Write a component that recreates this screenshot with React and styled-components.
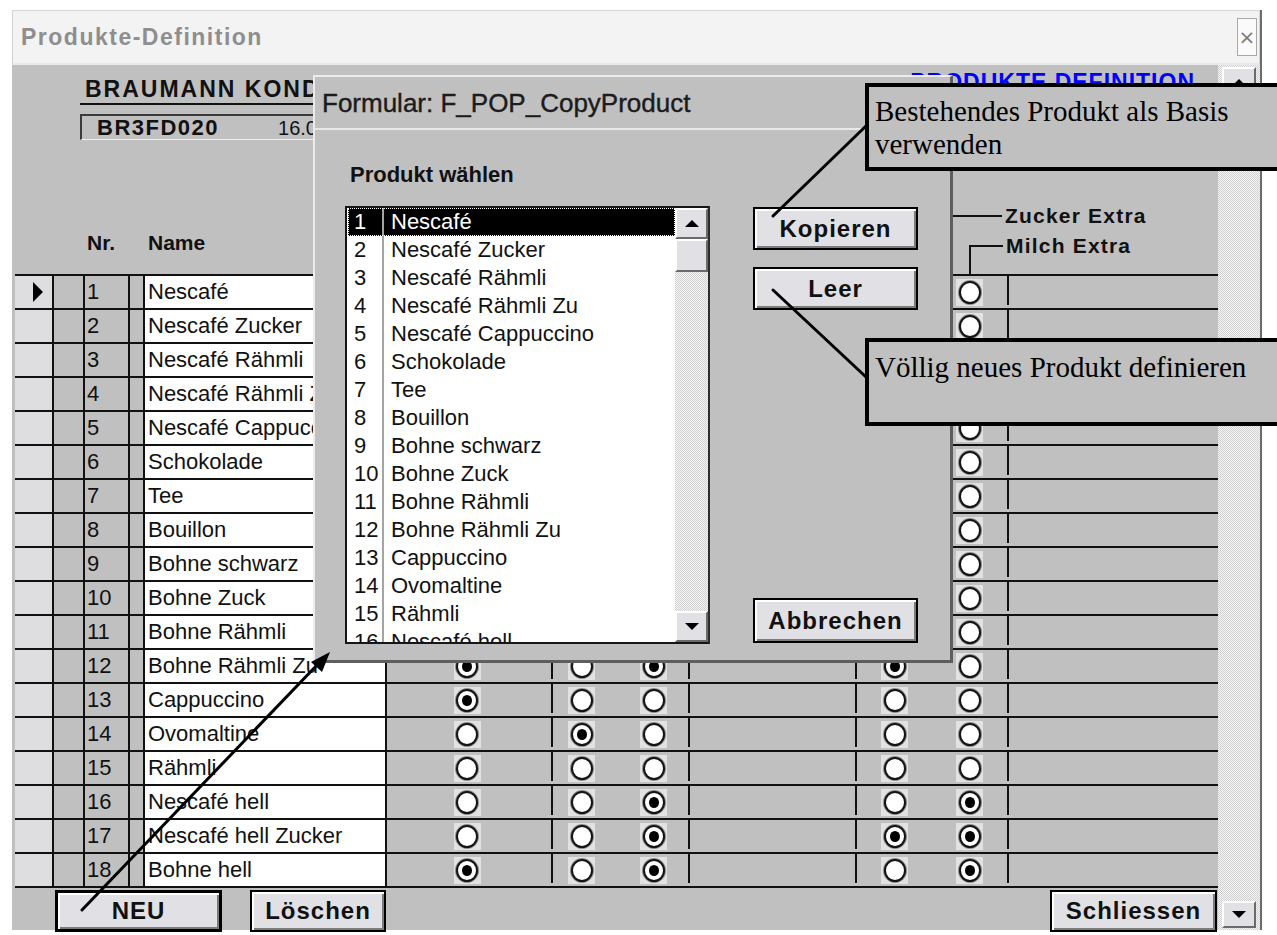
import React from "react";
import styled, { createGlobalStyle, css } from "styled-components";

const INK = "#111111";
const FACE = "#c0c0c0";
const BTN = "#e1e1e5";
const SANS = `"Liberation Sans", Arial, sans-serif`;
const SERIF = `"Liberation Serif", "Times New Roman", serif`;

const dither = css`
  background-color: #f2f2f2;
  background-image: repeating-conic-gradient(#cfcfcf 0 25%, #f6f6f6 0 50%);
  background-size: 2px 2px;
`;

const GlobalStyle = createGlobalStyle`
  *, *::before, *::after { box-sizing: border-box; }
  html, body { margin: 0; padding: 0; overflow: hidden; background: #ffffff; }
  body { font-family: ${SANS}; color: ${INK}; }
`;

/* ---------- desktop + main window ---------- */

const Screen = styled.div`
  position: relative;
  width: 1277px;
  height: 935px;
  overflow: hidden;
  background: #ffffff;
`;

const Window = styled.div`
  margin: 10px 0 0 12px;
  width: 1250px;
  height: 920px;
  display: flex;
  flex-direction: column;
  background: ${FACE};
  border-right: 2px solid #6c6c6c;
`;

const TitleBar = styled.header`
  height: 55px;
  flex: none;
  display: flex;
  align-items: center;
  padding: 0 2px 0 8px;
  background: #f3f3f3;
  border: 1px solid #d4d4d4;
  border-bottom: 2px solid #e9e9e9;
`;

const WindowTitle = styled.h1`
  margin: 0;
  font: bold 23px/1 ${SANS};
  letter-spacing: 1.5px;
  color: #8e8e8e;
`;

const CloseBox = styled.span`
  margin-left: auto;
  width: 20px;
  height: 38px;
  display: flex;
  align-items: center;
  justify-content: center;
  border: 1px solid #a8a8a8;
  background: #fafafa;
  color: #7a7a7a;
  font: 20px/1 "DejaVu Sans", sans-serif;
`;

const Body = styled.div`
  flex: 1;
  min-height: 0;
  display: flex;
`;

const Form = styled.main`
  flex: 1;
  min-width: 0;
  display: flex;
  flex-direction: column;
  padding-left: 3px;
`;

/* ---------- form header ---------- */

const Header = styled.div`
  height: 211px;
  width: 1203px;
  flex: none;
  display: flex;
  border-bottom: 2px solid ${INK};
`;

const HeaderLeft = styled.div`
  width: 370px;
  flex: none;
  display: flex;
  flex-direction: column;
  padding-left: 65px;
`;

const Company = styled.div`
  margin-top: 10px;
  width: 233px;
  height: 30px;
  padding-left: 5px;
  border-bottom: 2px solid ${INK};
  font: bold 23px/28px ${SANS};
  letter-spacing: 2px;
  white-space: nowrap;
  overflow: hidden;
`;

const CodeBox = styled.div`
  margin-top: 9px;
  width: 233px;
  height: 26px;
  display: flex;
  align-items: center;
  gap: 59px;
  padding-left: 15px;
  border-top: 2px solid #3a3a3a;
  border-left: 2px solid #3a3a3a;
  border-bottom: 1px solid #efefef;
  font: 20px/1 ${SANS};
  white-space: nowrap;
  overflow: hidden;
`;

const CodeId = styled.b`
  font: bold 22px/1 ${SANS};
  letter-spacing: 1.5px;
`;

const ColumnLabels = styled.div`
  margin-top: auto;
  margin-bottom: 20px;
  display: flex;
  font: bold 21px/22px ${SANS};
`;

const ColumnLabel = styled.span`
  width: ${(p) => p.$w}px;
  padding-left: ${(p) => p.$pad || 0}px;
`;

const HeaderRight = styled.div`
  flex: 1;
  display: flex;
  flex-direction: column;
`;

const ReportTitle = styled.div`
  align-self: flex-end;
  margin: 4px 23px 0 0;
  font: bold 23px/26px ${SANS};
  letter-spacing: 1px;
  color: #0000ff;
  white-space: nowrap;
`;

const Legend = styled.div`
  margin-top: auto;
  display: grid;
`;

const Bracket = styled.div`
  grid-area: 1 / 1;
  align-self: end;
  display: flex;
  align-items: flex-start;
  margin-left: ${(p) => p.$left}px;
`;

const BracketLine = styled.span`
  width: ${(p) => p.$w}px;
  height: ${(p) => p.$h}px;
  border-left: 2px solid ${INK};
  border-top: 2px solid ${INK};
`;

const BracketLabel = styled.span`
  margin: -10px 0 0 3px;
  font: bold 21px/22px ${SANS};
  letter-spacing: 1.2px;
  white-space: nowrap;
`;

/* ---------- datasheet rows ---------- */

const Rows = styled.div`
  display: flex;
  flex-direction: column;
`;

const Row = styled.div`
  width: 1203px;
  height: 34px;
  display: flex;
  border-bottom: 2px solid ${INK};
  font: 22px/1 ${SANS};
`;

const Selector = styled.div`
  width: 37px;
  flex: none;
  display: flex;
  align-items: center;
  padding-left: 18px;
  background: #dedee1;
`;

const RowMarker = styled.span`
  width: 0;
  height: 0;
  border-top: 10px solid transparent;
  border-bottom: 10px solid transparent;
  border-left: 10px solid #000;
`;

const Cell = styled.div`
  width: ${(p) => p.$w}px;
  flex: none;
  border-left: 2px solid ${INK};
`;

const NrCell = styled(Cell)`
  display: flex;
  align-items: center;
  padding-left: 2px;
`;

const NameCell = styled(Cell)`
  display: flex;
  align-items: center;
  padding-left: 3px;
  background: #ffffff;
  border-right: 2px solid ${INK};
  white-space: nowrap;
  overflow: hidden;
`;

const RadioGroup = styled.div`
  width: ${(p) => p.$w}px;
  flex: none;
  display: flex;
  align-items: center;
  justify-content: ${(p) => (p.$single ? "center" : "space-between")};
  padding: ${(p) => p.$pad || "0"};
`;

const Divider = styled.span`
  width: 2px;
  flex: none;
  margin-bottom: 3px;
  background: ${INK};
`;

const Filler = styled.div`
  flex: 1;
`;

const RadioFrame = styled.span`
  width: 27px;
  height: 27px;
  display: flex;
  align-items: center;
  justify-content: center;
  background: #e2e2e2;
`;

const RadioDot = styled.span`
  width: 22px;
  height: 23px;
  border-radius: 50%;
  display: flex;
  align-items: center;
  justify-content: center;
  background: #ffffff;
  border: 2px solid #141414;
  box-shadow: 0 0 0 1px #8a8a8a;

  &::after {
    content: "";
    display: ${(p) => (p.$on ? "block" : "none")};
    width: 10px;
    height: 11px;
    border-radius: 50%;
    background: #000;
  }
`;

function Radio({ on }) {
  return (
    <RadioFrame>
      <RadioDot $on={!!on} />
    </RadioFrame>
  );
}

/* ---------- buttons + scrollbars ---------- */

const Button = styled.button`
  width: ${(p) => p.$w}px;
  height: ${(p) => p.$h}px;
  margin: ${(p) => p.$m || "0"};
  flex: none;
  padding: 0;
  background: ${BTN};
  color: ${INK};
  font: bold 24px/1 ${SANS};
  letter-spacing: 1px;
  border: ${(p) => (p.$default ? "3px" : "2px")} solid #000;
  box-shadow: inset 2px 2px 0 #ffffff, inset -2px -2px 0 #7c7c7c;
  cursor: default;
`;

const VScroll = styled.div`
  width: 42px;
  flex: none;
  display: flex;
  flex-direction: column;
  justify-content: space-between;
  padding: 2px 4px 2px 4px;
  ${dither}
`;

const ListScroll = styled.div`
  width: 33px;
  flex: none;
  display: flex;
  flex-direction: column;
  ${dither}
`;

const ScrollButton = styled.span`
  height: ${(p) => p.$h}px;
  flex: none;
  display: flex;
  align-items: center;
  justify-content: center;
  margin-top: ${(p) => (p.$end ? "auto" : "0")};
  background: ${BTN};
  border-top: 2px solid #ffffff;
  border-left: 2px solid #ffffff;
  border-right: 2px solid #6a6a6a;
  border-bottom: 2px solid #6a6a6a;
`;

const Arrow = styled.span`
  width: 0;
  height: 0;
  border-left: 7px solid transparent;
  border-right: 7px solid transparent;
  ${(p) =>
    p.$up ? `border-bottom: 7px solid #000;` : `border-top: 7px solid #000;`}
`;

const BottomBar = styled.div`
  height: 42px;
  flex: none;
  display: flex;
  padding-top: 2px;
  width: 1203px;
`;

/* ---------- copy dialog ---------- */

const Dialog = styled.section`
  position: absolute;
  left: 313px;
  top: 75px;
  width: 640px;
  height: 588px;
  display: flex;
  flex-direction: column;
  background: ${FACE};
  border-top: 2px solid #ececec;
  border-left: 2px solid #ececec;
  border-right: 3px solid #5e5e5e;
  border-bottom: 3px solid #5e5e5e;
`;

const DialogTitle = styled.h2`
  margin: 0;
  height: 53px;
  flex: none;
  display: flex;
  align-items: center;
  padding-left: 7px;
  border-bottom: 2px solid #e8e8e8;
  font: 26px/1 ${SANS};
  -webkit-text-stroke: 0.4px #1c1c1c;
  color: #1c1c1c;
`;

const DialogBody = styled.div`
  flex: 1;
  display: flex;
  padding-left: 30px;
`;

const PickColumn = styled.div`
  display: flex;
  flex-direction: column;
`;

const Prompt = styled.div`
  margin-top: 33px;
  padding-left: 5px;
  font: bold 22px/24px ${SANS};
`;

const ListBox = styled.div`
  margin-top: 19px;
  width: 365px;
  height: 438px;
  display: flex;
  background: #ffffff;
  border: 2px solid #161616;
  border-right-color: #2c2c2c;
`;

const ListItems = styled.div`
  flex: 1;
  overflow: hidden;
  padding-left: 1px;
`;

const ListItem = styled.div`
  height: 28px;
  display: flex;
  font: 22px/1 ${SANS};
  white-space: nowrap;
  ${(p) =>
    p.$selected &&
    css`
      background: #000;
      color: #fff;
      outline: 1px dotted #ffffff;
      outline-offset: -1px;
    `}
`;

const ItemNo = styled.span`
  width: 36px;
  flex: none;
  display: flex;
  align-items: center;
  padding-left: 6px;
  border-right: 2px solid #a4a4a4;
`;

const ItemName = styled.span`
  display: flex;
  align-items: center;
  padding-left: 7px;
`;

const ActionColumn = styled.div`
  display: flex;
  flex-direction: column;
  margin-left: 43px;
  padding: 77px 0 17px;
`;

/* ---------- notes drawn over the screen ---------- */

const Callout = styled.div`
  position: absolute;
  left: 865px;
  top: ${(p) => p.$top}px;
  width: 440px;
  height: 88px;
  padding: ${(p) => p.$padTop}px 6px 0;
  background: ${FACE};
  border: 4px solid #000;
  font: 29px/33px ${SERIF};
  color: #000;
  white-space: nowrap;
`;

const Leaders = styled.svg`
  position: absolute;
  left: 0;
  top: 0;
  pointer-events: none;
`;

const products = [
  ["Nescafé", [1, 0, 1, 0, 0]],
  ["Nescafé Zucker", [1, 0, 1, 1, 0]],
  ["Nescafé Rähmli", [0, 1, 1, 0, 0]],
  ["Nescafé Rähmli Zu", [0, 1, 1, 1, 0]],
  ["Nescafé Cappuccino", [1, 0, 0, 0, 0]],
  ["Schokolade", [0, 1, 0, 0, 0]],
  ["Tee", [0, 0, 0, 0, 0]],
  ["Bouillon", [0, 0, 0, 0, 0]],
  ["Bohne schwarz", [1, 0, 1, 0, 0]],
  ["Bohne Zuck", [1, 0, 1, 1, 0]],
  ["Bohne Rähmli", [1, 0, 1, 0, 0]],
  ["Bohne Rähmli Zu", [1, 0, 1, 1, 0]],
  ["Cappuccino", [1, 0, 0, 0, 0]],
  ["Ovomaltine", [0, 1, 0, 0, 0]],
  ["Rähmli", [0, 0, 0, 0, 0]],
  ["Nescafé hell", [0, 0, 1, 0, 1]],
  ["Nescafé hell Zucker", [0, 0, 1, 1, 1]],
  ["Bohne hell", [1, 0, 1, 0, 1]],
];

function ProductRow({ no, name, picks, current }) {
  const [a, b, c, d, e] = picks;
  return (
    <Row>
      <Selector>{current && <RowMarker />}</Selector>
      <Cell $w={31} />
      <NrCell $w={45}>{no}</NrCell>
      <Cell $w={15} />
      <NameCell $w={244}>{name}</NameCell>
      <RadioGroup $w={164} $single $pad="0 4px 0 0">
        <Radio on={a} />
      </RadioGroup>
      <Divider />
      <RadioGroup $w={135} $pad="0 21px 0 15px">
        <Radio on={b} />
        <Radio on={c} />
      </RadioGroup>
      <Divider />
      <RadioGroup $w={165} />
      <Divider />
      <RadioGroup $w={150} $pad="0 24px 0 24px">
        <Radio on={d} />
        <Radio on={e} />
      </RadioGroup>
      <Divider />
      <Filler />
    </Row>
  );
}

export default function App() {
  return (
    <Screen>
      <GlobalStyle />
      <Window>
        <TitleBar>
          <WindowTitle>Produkte-Definition</WindowTitle>
          <CloseBox>×</CloseBox>
        </TitleBar>
        <Body>
          <Form>
            <Header>
              <HeaderLeft>
                <Company>BRAUMANN KONDITOREI</Company>
                <CodeBox>
                  <CodeId>BR3FD020</CodeId>
                  <span>16.03.2001</span>
                </CodeBox>
                <ColumnLabels>
                  <ColumnLabel $w={68} $pad={7}>Nr.</ColumnLabel>
                  <ColumnLabel $w={120}>Name</ColumnLabel>
                </ColumnLabels>
              </HeaderLeft>
              <HeaderRight>
                <ReportTitle>PRODUKTE DEFINITION</ReportTitle>
                <Legend>
                  <Bracket $left={509}>
                    <BracketLine $w={108} $h={59} />
                    <BracketLabel>Zucker Extra</BracketLabel>
                  </Bracket>
                  <Bracket $left={584}>
                    <BracketLine $w={34} $h={29} />
                    <BracketLabel>Milch Extra</BracketLabel>
                  </Bracket>
                </Legend>
              </HeaderRight>
            </Header>
            <Rows>
              {products.map(([name, picks], i) => (
                <ProductRow
                  key={name}
                  no={i + 1}
                  name={name}
                  picks={picks}
                  current={i === 0}
                />
              ))}
            </Rows>
            <BottomBar>
              <Button $default $w={167} $h={42} $m="0 0 0 40px">
                NEU
              </Button>
              <Button $w={136} $h={42} $m="0 0 0 28px">
                Löschen
              </Button>
              <Button $w={167} $h={42} $m="0 1px 0 auto">
                Schliessen
              </Button>
            </BottomBar>
          </Form>
          <VScroll>
            <ScrollButton $h={30}>
              <Arrow $up />
            </ScrollButton>
            <ScrollButton $h={27}>
              <Arrow />
            </ScrollButton>
          </VScroll>
        </Body>
      </Window>

      <Dialog>
        <DialogTitle>Formular: F_POP_CopyProduct</DialogTitle>
        <DialogBody>
          <PickColumn>
            <Prompt>Produkt wählen</Prompt>
            <ListBox>
              <ListItems>
                {products.map(([name], i) => (
                  <ListItem key={name} $selected={i === 0}>
                    <ItemNo>{i + 1}</ItemNo>
                    <ItemName>{name}</ItemName>
                  </ListItem>
                ))}
              </ListItems>
              <ListScroll>
                <ScrollButton $h={31}>
                  <Arrow $up />
                </ScrollButton>
                <ScrollButton $h={33} />
                <ScrollButton $h={31} $end>
                  <Arrow />
                </ScrollButton>
              </ListScroll>
            </ListBox>
          </PickColumn>
          <ActionColumn>
            <Button $w={165} $h={43}>
              Kopieren
            </Button>
            <Button $w={165} $h={43} $m="17px 0 0">
              Leer
            </Button>
            <Button $w={165} $h={45} $m="auto 0 0">
              Abbrechen
            </Button>
          </ActionColumn>
        </DialogBody>
      </Dialog>

      <Callout $top={83} $padTop={8}>
        Bestehendes Produkt als Basis
        <br />
        verwenden
      </Callout>
      <Callout $top={338} $padTop={9}>
        Völlig neues Produkt definieren
      </Callout>

      <Leaders width="1277" height="935" viewBox="0 0 1277 935">
        <g stroke="#000" strokeWidth="3" strokeLinecap="round" fill="none">
          <line x1="773" y1="216" x2="866" y2="126" />
          <line x1="773" y1="290" x2="866" y2="377" />
          <line x1="82" y1="910" x2="318" y2="664" />
        </g>
        <polygon points="330,652 322,672 311,662" fill="#000" />
      </Leaders>
    </Screen>
  );
}
